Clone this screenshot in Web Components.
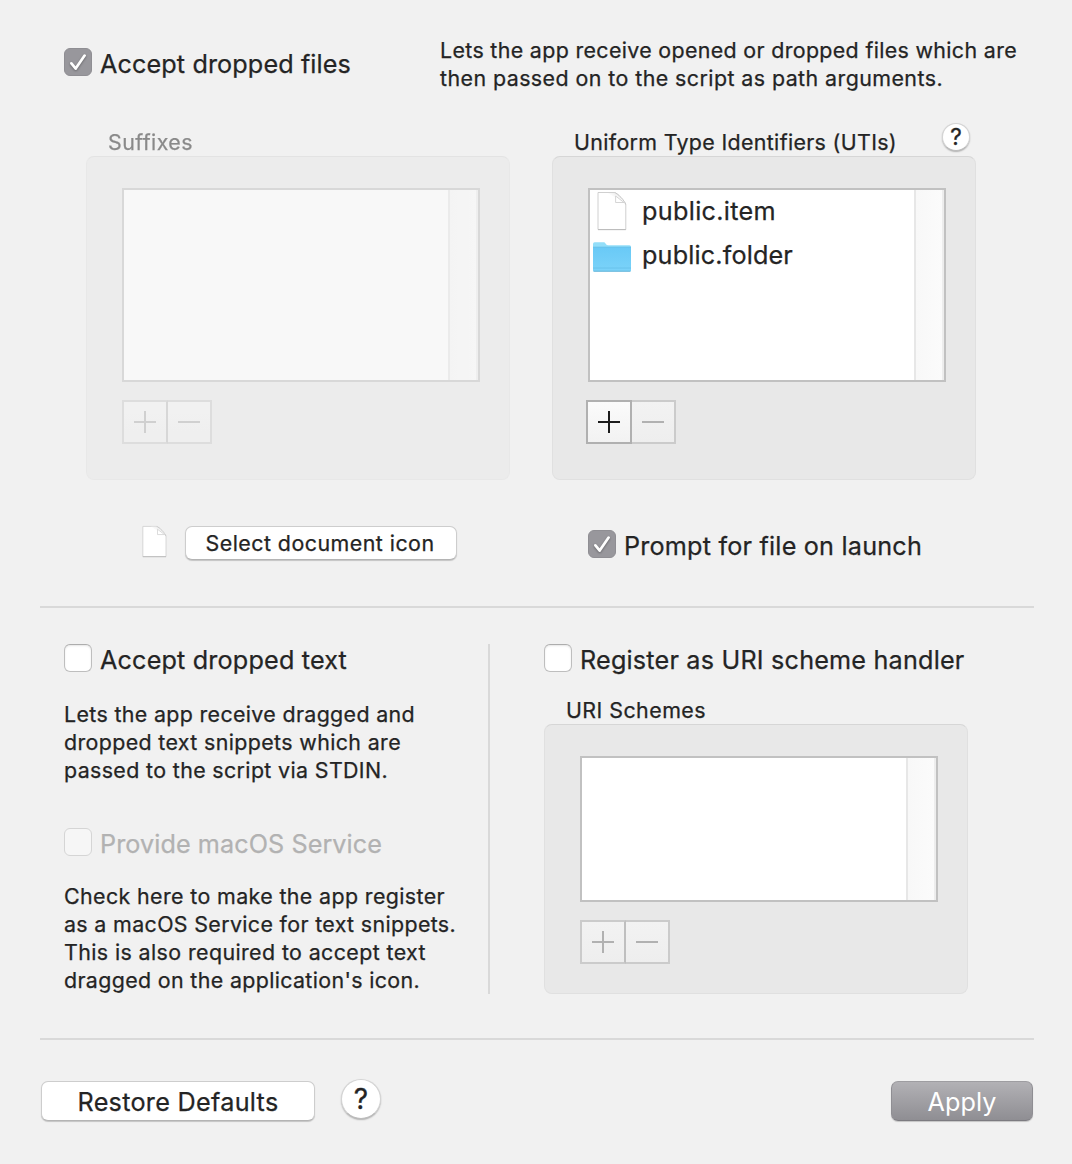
<!DOCTYPE html>
<html lang="en">
<head>
<meta charset="utf-8">
<title>Drop Settings</title>
<style>
html,body{margin:0;padding:0;background:#f1f1f1}
body{width:1072px;height:1164px;overflow:hidden;font-family:Inter,"Liberation Sans",sans-serif;color:#242424}
</style>
</head>
<body>
<drop-settings></drop-settings>
<script>
const define = (name, html, setup) => customElements.define(name, class extends HTMLElement {
  connectedCallback() {
    if (!this.shadowRoot) {
      this.attachShadow({ mode: 'open' }).innerHTML = html;
    }
    if (setup) setup(this, this.shadowRoot);
  }
});

/* One line of text tracked out to the advance width given in "w". */
define('text-line', `
<style>
:host{display:block;white-space:nowrap;font-size:21.4px;line-height:28px;height:28px;-webkit-text-stroke:.25px currentColor}
:host([large]){font-size:25.2px;line-height:32px;height:32px}
:host([light]){-webkit-text-stroke:0}
span{display:inline-block}
</style><span><slot></slot></span>`, (el, root) => {
  const span = root.querySelector('span');
  const width = parseFloat(el.getAttribute('w'));
  if (!width) return;
  span.style.letterSpacing = '0';
  const count = el.textContent.length;
  span.style.letterSpacing = ((width - span.getBoundingClientRect().width) / count).toFixed(4) + 'px';
});

define('check-box', `
<style>
:host{display:flex;align-items:flex-start;gap:8px;height:32px}
i{box-sizing:border-box;display:block;flex:none;width:28px;height:28px;border-radius:6px;background:#fff;border:1px solid #bebebe;border-top-color:#adadad;box-shadow:inset 0 1px 2px #0000001a}
:host([checked]) i{background:#98979c;border-color:#8f8e93;box-shadow:none}
svg{display:none;width:26px;height:26px}
:host([checked]) svg{display:block;filter:drop-shadow(0 1px 1px #0005)}
:host([disabled]) i{background:#f6f6f6;border-color:#d5d5d5;box-shadow:none}
:host([disabled]){color:#b2b2b2}
</style>
<i><svg viewBox="0 0 26 26" fill="none" stroke="#fff" stroke-width="2.7" stroke-linecap="round" stroke-linejoin="round"><path d="M6.4 14.4 L10.7 19.6 L19.6 6.6"/></svg></i><slot></slot>`);

define('help-button', `
<style>
:host{display:flex;box-sizing:border-box;align-items:center;justify-content:center;width:28px;height:28px;border-radius:50%;background:#fff;border:1px solid #d4d4d4;border-bottom-color:#bcbcbc;box-shadow:0 1px 1.5px #0004;font-size:22.5px;line-height:24px;-webkit-text-stroke:.3px currentColor}
:host([large]){width:40px;height:40px;font-size:28px;line-height:36px}
</style><slot>?</slot>`);

define('push-button', `
<style>
:host{display:flex;box-sizing:border-box;justify-content:center;border-radius:7px;background:#fff;border:1px solid #cdcdcd;border-bottom-color:#b4b4b4;box-shadow:0 1px 1px #00000030}
:host([primary]){color:#fff;background:linear-gradient(#b3b2b6,#8e8d92) border-box;border-color:#9e9da1 #8f8e93 #7c7b80}
</style><slot></slot>`);

define('doc-icon', `
<style>:host{display:block;flex:none}svg{display:block;width:100%;height:100%;overflow:visible}</style>
<svg viewBox="0 0 30 38" preserveAspectRatio="none">
<defs><linearGradient id="g" x1="0" y1="1" x2="1" y2="0"><stop offset=".4" stop-color="#fff"/><stop offset="1" stop-color="#dedede"/></linearGradient></defs>
<path d="M1 .5H17.5C20 .5 28.8 10 28.8 13V37.5H1Z" fill="#fff" stroke="#cbcbcb" stroke-width=".9"/>
<path d="M1 37.6H28.8" stroke="#bcbcbc" stroke-width="1.1"/>
<path d="M11 .9H17.5C20.5 1.2 27 7 28.2 10.5H18.5V6Z" fill="url(#g)"/>
<path d="M18.6 4V10.5H27Z" fill="#fff" stroke="#d0d0d0" stroke-width=".9"/>
<path d="M17.5 .6C20.5 1.2 28 9 28.7 12.5" fill="none" stroke="#c4c4c4" stroke-width=".9"/>
</svg>`);

define('folder-icon', `
<style>:host{display:block;flex:none;width:38px;height:30px}svg{display:block}</style>
<svg width="38" height="30" viewBox="0 0 38 30">
<defs><linearGradient id="f" x1="0" y1="0" x2="0" y2="1"><stop offset="0" stop-color="#69c9f6"/><stop offset="1" stop-color="#7bd3f9"/></linearGradient></defs>
<path d="M0 28V2Q0 .3 1.6 .3H10.5C13 .3 12.4 3.2 15 3.2H36.5Q38 3.2 38 5V28Q38 29.6 36.4 29.6H1.6Q0 29.6 0 28Z" fill="#93def9"/>
<path d="M0 5.2H38V28Q38 29.6 36.4 29.6H1.6Q0 29.6 0 28Z" fill="url(#f)"/>
<path d="M0 5.2H38" stroke="#5fbce8" stroke-width=".8"/>
<path d="M0 26H38" stroke="#65bfe8" stroke-width=".8"/>
<path d="M.6 29.2H37.4" stroke="#6ab2d4" stroke-width=".9"/>
</svg>`);

define('list-view', `
<style>
:host{display:flex;box-sizing:border-box;width:358px;height:194px;border:2px solid #c1c1c1;background:#fff}
.rows{flex:1;display:flex;flex-direction:column}
.track{box-sizing:border-box;width:30px;border-left:2px solid #e7e7e7;border-right:2px solid #ededed;background:linear-gradient(90deg,#f8f8f8,#fbfbfb)}
</style><div class="rows"><slot></slot></div><div class="track"></div>`);

define('list-row', `
<style>
:host{display:flex;height:44px}
.icon{width:50px;box-sizing:border-box;padding-left:var(--inset,3px);padding-top:var(--drop,2px)}
.label{padding:5px 0 0 2px}
</style><div class="icon"><slot name="icon"></slot></div><div class="label"><slot></slot></div>`);

define('add-remove', `
<style>
:host{display:flex;width:90px;height:44px;--edge:#cbcbcb;--ink:#b1b1b1}
div{box-sizing:border-box;height:44px;border:2px solid var(--edge);background:linear-gradient(#f2f2f2,#eee)}
.add{width:46px;border-right-color:#bfbfbf}
.remove{width:44px;border-left:0}
svg{display:block}
path{stroke:var(--ink);stroke-width:2}
:host([active]) .add{--edge:#b0b0b0;--ink:#1c1c1c;border-color:#b0b0b0;background:linear-gradient(#fbfbfb,#f2f2f2)}
</style>
<div class="add"><svg width="42" height="40"><path d="M10 20H32M21 9V31"/></svg></div>
<div class="remove"><svg width="42" height="40"><path d="M10 20H32"/></svg></div>`);

define('group-box', `
<style>
:host{display:block;width:424px}
:host([disabled]){opacity:.5}
.head{display:flex;justify-content:space-between;height:28px;padding-left:22px}
.box{box-sizing:border-box;height:var(--h,324px);padding:31px 0 0 35px;border:1px solid #e0e0e0;border-top-color:#d6d6d6;border-radius:8px;background:#e8e8e8;display:flex;flex-direction:column;gap:18px}
</style><div class="head"><slot name="title"></slot></div><div class="box"><slot></slot></div>`);

define('rule-line', `
<style>:host{display:block;height:2px;background:#d9d9d9;margin:0 38px 0 40px}</style>`);

define('drop-settings', `
<style>
:host{display:flex;flex-direction:column;height:1164px}
.intro{display:flex;height:92px;padding:36px 0 0 64px}
.intro check-box{width:376px;padding-top:12px}
.groups{display:flex;gap:42px;padding-left:86px;height:352px}
.groups help-button{margin:-5px 6px 0 0}
.file-options{display:flex;padding:46px 0 0 142px;height:80px}
.file-options doc-icon{width:25px;height:31px;margin-right:18px}
.file-options push-button{width:272px;height:34px;padding-top:2px}
.file-options check-box{margin:4px 0 0 131px}
.middle{display:flex;height:350px;padding:36px 0 44px 64px}
.text-side{width:424px}
.divider{width:2px;background:#d9d9d9;margin-right:54px}
.text-side .para{padding:24px 0 44px}
.text-side .last{padding:22px 0 0}
.uri group-box{--h:270px;margin-top:20px}
.uri list-view{height:146px}
.footer{display:flex;padding:41px 39px 0 41px}
.footer push-button{height:40px;padding-top:4px}
.footer help-button{margin:-2px 0 0 26px}
.footer push-button[primary]{margin-left:auto}
.item{width:30px;height:38px}
</style>
<div class="intro">
 <check-box checked><text-line large w="251">Accept dropped files</text-line></check-box>
 <div><text-line w="577">Lets the app receive opened or dropped files which are</text-line><text-line w="503">then passed on to the script as path arguments.</text-line></div>
</div>
<div class="groups">
 <group-box disabled><text-line slot="title" w="85">Suffixes</text-line><list-view></list-view><add-remove></add-remove></group-box>
 <group-box><text-line slot="title" w="323">Uniform Type Identifiers (UTIs)</text-line><help-button slot="title"></help-button>
  <list-view>
   <list-row style="--inset:7px"><doc-icon slot="icon" class="item"></doc-icon><text-line large w="134">public.item</text-line></list-row>
   <list-row style="--drop:8px"><folder-icon slot="icon"></folder-icon><text-line large w="151">public.folder</text-line></list-row>
  </list-view><add-remove active style="margin-left:-2px"></add-remove></group-box>
</div>
<div class="file-options">
 <doc-icon></doc-icon>
 <push-button><text-line w="229" style="margin-left:-2px">Select document icon</text-line></push-button>
 <check-box checked><text-line large w="298">Prompt for file on launch</text-line></check-box>
</div>
<rule-line></rule-line>
<div class="middle">
 <div class="text-side">
  <check-box><text-line large w="247">Accept dropped text</text-line></check-box>
  <div class="para"><text-line w="351">Lets the app receive dragged and</text-line><text-line w="337">dropped text snippets which are</text-line><text-line w="324">passed to the script via STDIN.</text-line></div>
  <check-box disabled><text-line large w="282">Provide macOS Service</text-line></check-box>
  <div class="last"><text-line w="381">Check here to make the app register</text-line><text-line w="392">as a macOS Service for text snippets.</text-line><text-line w="362">This is also required to accept text</text-line><text-line w="356">dragged on the application's icon.</text-line></div>
 </div>
 <div class="divider"></div>
 <div class="uri">
  <check-box><text-line large w="384.5">Register as URI scheme handler</text-line></check-box>
  <group-box><text-line slot="title" w="140">URI Schemes</text-line><list-view></list-view><add-remove></add-remove></group-box>
 </div>
</div>
<rule-line></rule-line>
<div class="footer">
 <push-button style="width:274px"><text-line large w="201">Restore Defaults</text-line></push-button>
 <help-button large></help-button>
 <push-button primary style="width:142px"><text-line large light w="69">Apply</text-line></push-button>
</div>`);
</script>
</body>
</html>
